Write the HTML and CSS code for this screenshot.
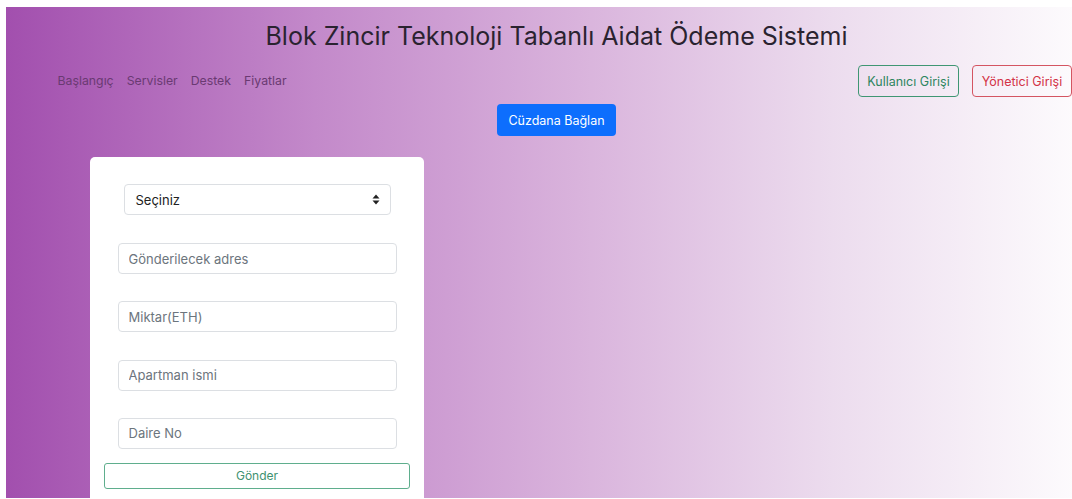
FILE: index.html
```html
<!DOCTYPE html>
<html lang="tr">
<head>
<meta charset="utf-8">
<title>Aidat Ödeme Sistemi</title>
<link rel="stylesheet" href="styles.css">
</head>
<body>
<div class="page">
  <h1 class="title">Blok Zincir Teknoloji Tabanlı Aidat Ödeme Sistemi</h1>

  <div class="navbar">
    <nav class="nav">
      <a href="#" class="nav-link">Başlangıç</a>
      <a href="#" class="nav-link">Servisler</a>
      <a href="#" class="nav-link">Destek</a>
      <a href="#" class="nav-link">Fiyatlar</a>
    </nav>
    <div class="auth">
      <button class="btn btn-outline-success">Kullanıcı Girişi</button>
      <button class="btn btn-outline-danger">Yönetici Girişi</button>
    </div>
  </div>

  <div class="wallet-row">
    <button class="btn btn-primary">Cüzdana Bağlan</button>
  </div>

  <form class="card">
    <div class="select">
      <span>Seçiniz</span>
      <svg class="select-arrow" width="8" height="11" viewBox="0 0 8 11"><path d="M4 0.5 L7.5 4.5 H0.5 Z M4 10.5 L7.5 6.5 H0.5 Z" fill="#222"/></svg>
    </div>
    <input class="field first" type="text" placeholder="Gönderilecek adres">
    <input class="field" type="text" placeholder="Miktar(ETH)">
    <input class="field" type="text" placeholder="Apartman ismi">
    <input class="field" type="text" placeholder="Daire No">
    <button type="button" class="submit">Gönder</button>
  </form>
</div>
</body>
</html>
```

FILE: styles.css
```css
html {
  overflow: hidden;
}

body {
  margin: 0;
  background: #fff;
  font-family: Inter, "Noto Sans", "Liberation Sans", sans-serif;
  color: #212529;
}

.page {
  margin: 7px 0 0 6px;
  width: 1101px;
  height: 491px;
  background: linear-gradient(to right, #a24fae 0%, #c389ca 28%, #d9b3dc 52%, #ecdcee 75%, #ffffff 100%);
}

.title {
  margin: 0;
  padding-top: 14px;
  text-align: center;
  font-size: 25px;
  line-height: 30px;
  font-weight: 400;
  color: #2a2330;
}

.navbar {
  display: flex;
  align-items: center;
  justify-content: space-between;
  margin-top: 14px;
  padding: 0 35px 0 45px;
}

.nav {
  display: flex;
}

.nav-link {
  padding: 0 6.5px;
  font-size: 12.3px;
  line-height: 20px;
  color: #6a3a72;
  text-decoration: none;
}

.auth {
  display: flex;
  gap: 13px;
}

.btn {
  height: 32px;
  padding: 0;
  border-radius: 4px;
  font-family: inherit;
  font-size: 12.5px;
  white-space: nowrap;
  background: transparent;
  cursor: pointer;
}

.btn-outline-success {
  border: 1px solid #3f9673;
  color: #2e8660;
  width: 101px;
}

.btn-outline-danger {
  border: 1px solid #d45562;
  color: #d33447;
  width: 100px;
}

.wallet-row {
  display: flex;
  justify-content: center;
  margin-top: 7px;
}

.btn-primary {
  width: 119px;
  border: none;
  background: #0d6efd;
  color: #fff;
}

.card {
  margin: 21px 0 0 84px;
  width: 334px;
  height: 360px;
  box-sizing: border-box;
  background: #fff;
  border-radius: 5px;
  padding: 27px 14px 0;
  display: flex;
  flex-direction: column;
  align-items: center;
}

.select {
  box-sizing: border-box;
  width: 267px;
  height: 31px;
  border: 1px solid #dcdfe3;
  border-radius: 4px;
  display: flex;
  align-items: center;
  justify-content: space-between;
  padding: 0 10px 0 11px;
  font-size: 13px;
  color: #222;
}

.select-arrow {
  display: block;
}

.field {
  box-sizing: border-box;
  width: 279px;
  height: 31px;
  margin-top: 27.3px;
  border: 1px solid #dcdfe3;
  border-radius: 4px;
  padding: 0 10px;
  font-family: inherit;
  font-size: 13px;
  color: #212529;
  background: #fff;
}

.field.first {
  margin-top: 28px;
}

.field::placeholder {
  color: #6c757d;
}

.submit {
  box-sizing: border-box;
  width: 306px;
  height: 26px;
  margin-top: 14px;
  border: 1.5px solid #5fae8d;
  border-radius: 3px;
  background: #fff;
  font-family: inherit;
  font-size: 12px;
  color: #3e9270;
}
```
